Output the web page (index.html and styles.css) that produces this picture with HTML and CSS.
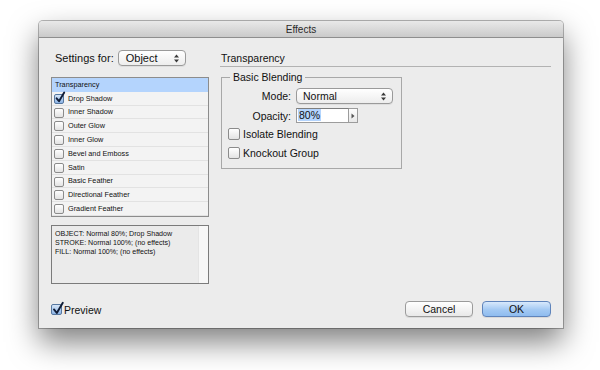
FILE: index.html
```html
<!DOCTYPE html>
<html>
<head>
<meta charset="utf-8">
<link rel="stylesheet" href="styles.css">
</head>
<body>
<div class="dialog">
  <div class="titlebar">Effects</div>
  <div class="main">
    <div class="left">
      <div class="settings-row">
        <span class="lbl">Settings for:</span>
        <div class="select select-obj">
          <span>Object</span>
          <svg class="arrows" width="5" height="9" viewBox="0 0 5 9"><polygon points="0,3.6 2.5,0.6 5,3.6" /><polygon points="0,5.4 2.5,8.4 5,5.4" /></svg>
        </div>
      </div>
      <ul class="effects-list">
        <li class="sel">Transparency</li>
        <li><span class="cb small checked"><svg width="10" height="11" viewBox="0 0 10 11"><path d="M1.6 6.3 L4 9.2 L9.2 0.6" /></svg></span>Drop Shadow</li>
        <li><span class="cb small"></span>Inner Shadow</li>
        <li><span class="cb small"></span>Outer Glow</li>
        <li><span class="cb small"></span>Inner Glow</li>
        <li><span class="cb small"></span>Bevel and Emboss</li>
        <li><span class="cb small"></span>Satin</li>
        <li><span class="cb small"></span>Basic Feather</li>
        <li><span class="cb small"></span>Directional Feather</li>
        <li><span class="cb small"></span>Gradient Feather</li>
      </ul>
      <div class="info">
        <div class="info-text">
          <div>OBJECT: Normal 80%; Drop Shadow</div>
          <div>STROKE: Normal 100%; (no effects)</div>
          <div>FILL: Normal 100%; (no effects)</div>
        </div>
        <div class="info-scroll"></div>
      </div>
    </div>
    <div class="right">
      <div class="heading">Transparency</div>
      <div class="group">
        <span class="legend">Basic Blending</span>
        <div class="form-row">
          <span class="flabel">Mode:</span>
          <div class="select select-mode">
            <span>Normal</span>
            <svg class="arrows" width="5" height="9" viewBox="0 0 5 9"><polygon points="0,3.6 2.5,0.6 5,3.6" /><polygon points="0,5.4 2.5,8.4 5,5.4" /></svg>
          </div>
        </div>
        <div class="form-row opacity-row">
          <span class="flabel">Opacity:</span>
          <div class="num"><span class="hl">80%</span></div>
          <div class="stepper"><svg width="4" height="6" viewBox="0 0 4 6"><polygon points="0.5,0.5 3.5,3 0.5,5.5" /></svg></div>
        </div>
        <div class="check-row first"><span class="cb"></span>Isolate Blending</div>
        <div class="check-row"><span class="cb"></span>Knockout Group</div>
      </div>
    </div>
  </div>
  <div class="footer">
    <div class="preview"><span class="cb checked"><svg width="12" height="13" viewBox="0 0 12 13"><path d="M2 7.4 L4.8 11 L10.8 0.8" /></svg></span>Preview</div>
    <div class="buttons">
      <div class="btn">Cancel</div>
      <div class="btn default">OK</div>
    </div>
  </div>
</div>
</body>
</html>
```
FILE: styles.css
```css
* { box-sizing: border-box; }
html, body { margin: 0; padding: 0; background: #ffffff; }
body {
  font-family: "Liberation Sans", Arial, sans-serif;
  color: #111;
  width: 600px;
  height: 370px;
  overflow: hidden;
}
.dialog {
  margin: 21px 0 0 39px;
  width: 524px;
  height: 307px;
  background: #ececec;
  border-radius: 4px 4px 0 0;
  box-shadow: 0 14px 30px rgba(0,0,0,0.5), 0 0 0 1px rgba(0,0,0,0.28);
  display: flex;
  flex-direction: column;
}
.titlebar {
  height: 17px;
  border-radius: 4px 4px 0 0;
  background: linear-gradient(#e9e9e9, #cacaca);
  border-bottom: 1px solid #8e8e8e;
  text-align: center;
  font-size: 10px;
  line-height: 17px;
  color: #2a2a2a;
}
.main {
  display: flex;
  gap: 11px;
  padding: 12px 12px 0 12px;
}
.left { width: 158px; display: flex; flex-direction: column; }
.right { width: 331px; }
.settings-row {
  display: flex;
  align-items: center;
  height: 16px;
  padding-left: 4px;
  gap: 4px;
}
.lbl { font-size: 11px; }
.select {
  display: flex;
  align-items: center;
  justify-content: space-between;
  height: 16px;
  border: 1px solid #9a9a9a;
  border-radius: 4px;
  background: linear-gradient(#ffffff, #ededed);
  box-shadow: 0 1px 0 rgba(0,0,0,0.06);
  font-size: 11px;
  padding: 0 6px 0 7px;
}
.select-obj { width: 68px; }
.arrows polygon { fill: #3a3a3a; }
.effects-list {
  list-style: none;
  margin: 11px 0 0 0;
  padding: 0;
  height: 140px;
  border: 1px solid #8c8c8c;
  background: #f3f3f3;
}
.effects-list li {
  height: 13.8px;
  display: flex;
  align-items: center;
  font-size: 7.3px;
  padding-left: 16px;
  border-bottom: 1px solid #e2e2e2;
  position: relative;
}
.effects-list li .cb {
  position: absolute;
  left: 2px;
  top: 2px;
}
.effects-list li.sel {
  background: #b4d4fd;
  padding-left: 3px;
  border-bottom-color: #b4d4fd;
}
.cb {
  display: inline-block;
  width: 12px;
  height: 12px;
  border: 1px solid #8b8b8b;
  border-radius: 2px;
  background: linear-gradient(#ffffff, #e3e3e3);
  position: relative;
  flex: none;
}
.cb.small { width: 10px; height: 10px; }
.cb.checked {
  background: linear-gradient(#d6e6f8, #8cb4e6);
  border-color: #56779f;
}
.cb svg {
  position: absolute;
  left: 0;
  top: -3px;
  overflow: visible;
}
.cb svg path {
  fill: none;
  stroke: #101c36;
  stroke-width: 1.9;
  stroke-linecap: round;
  stroke-linejoin: round;
}
.info {
  margin-top: 8px;
  height: 59px;
  border: 1px solid #7b7b7b;
  background: #ebebeb;
  display: flex;
}
.info-text {
  flex: 1;
  padding: 4px 0 0 3px;
  font-size: 7.1px;
  line-height: 9px;
}
.info-scroll {
  width: 10px;
  background: #f7f7f7;
  border-left: 1px solid #e4e4e4;
}
.heading {
  height: 17px;
  border-bottom: 1px solid #b2b2b2;
  font-size: 10.5px;
  line-height: 16px;
  padding-left: 1px;
}
.group {
  position: relative;
  margin: 10px 0 0 1px;
  width: 181px;
  height: 92px;
  border: 1px solid #a8a8a8;
  padding-top: 10px;
}
.legend {
  position: absolute;
  left: 8px;
  top: -8px;
  padding: 0 3px;
  background: #ececec;
  font-size: 10.5px;
  line-height: 14px;
}
.form-row {
  display: flex;
  align-items: center;
  height: 16px;
}
.flabel {
  width: 69px;
  text-align: right;
  font-size: 10.5px;
  margin-right: 5px;
}
.select-mode { width: 97px; padding-left: 6px; font-size: 10.5px; }
.opacity-row { margin-top: 4px; height: 15px; }
.num {
  width: 53px;
  height: 15px;
  background: #fff;
  border: 1px solid #9c9c9c;
  border-top-color: #7e7e7e;
  font-size: 10.5px;
  line-height: 13px;
  padding-left: 1px;
}
.hl { background: #b4d4fd; padding: 0 1px; }
.stepper {
  width: 9px;
  height: 15px;
  border: 1px solid #9c9c9c;
  border-left: none;
  background: linear-gradient(#fdfdfd, #e8e8e8);
  display: flex;
  align-items: center;
  justify-content: center;
}
.stepper polygon { fill: #555; }
.check-row {
  display: flex;
  align-items: center;
  gap: 3px;
  height: 12px;
  margin: 7px 0 0 6px;
  font-size: 10.5px;
}
.check-row.first { margin-top: 5px; }
.footer {
  margin-top: auto;
  padding: 0 12px 11px 12px;
  display: flex;
  align-items: center;
  justify-content: space-between;
  height: 27px;
}
.preview {
  display: flex;
  align-items: center;
  gap: 2px;
  font-size: 10.5px;
  padding-top: 1px;
}
.preview .cb { width: 11px; height: 11px; }
.buttons { display: flex; gap: 9px; }
.btn {
  width: 68px;
  height: 16px;
  border: 1px solid #9b9b9b;
  border-radius: 4px;
  background: linear-gradient(#ffffff, #e8e8e8);
  font-size: 10.5px;
  line-height: 14px;
  text-align: center;
  box-shadow: 0 1px 0 rgba(0,0,0,0.08);
}
.btn.default {
  width: 69px;
  border-color: #5f84bb;
  background: linear-gradient(#d8e9fc, #a3c9f3 55%, #8fbcef);
}
```
